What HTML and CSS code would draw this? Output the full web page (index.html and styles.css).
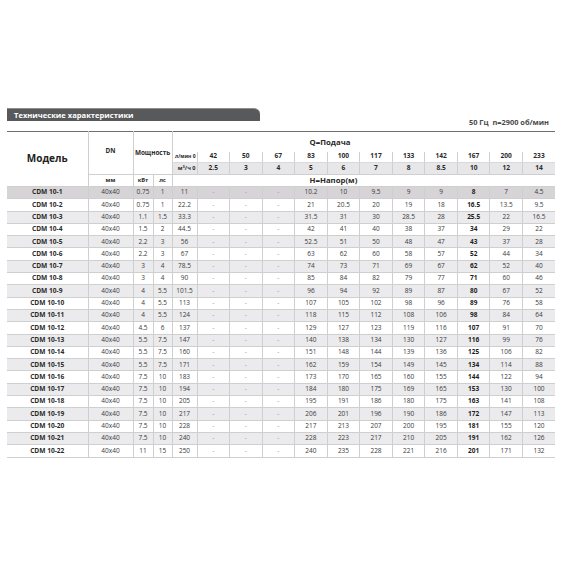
FILE: index.html
```html
<!DOCTYPE html>
<html lang="ru">
<head>
<meta charset="utf-8">
<title>CDM 10 — Технические характеристики</title>
<link rel="stylesheet" href="styles.css">
</head>
<body>
<div class="page">
  <div class="top">
    <div class="title">Технические характеристики</div>
    <div class="info">50 Гц&nbsp; n=2900 об/мин</div>
  </div>
  <table class="spec">
    <colgroup>
      <col class="c-model"><col class="c-dn"><col class="c-kw"><col class="c-hp"><col class="c-q0">
      <col class="c-q"><col class="c-q"><col class="c-q"><col class="c-q"><col class="c-q"><col class="c-q"><col class="c-q"><col class="c-q"><col class="c-q"><col class="c-q"><col class="c-q">
    </colgroup>
    <thead>
      <tr class="h-a">
        <th rowspan="4" class="model-h">Модель</th>
        <th rowspan="3" class="dn-h">DN</th>
        <th rowspan="3" colspan="2" class="pw-h">Мощность</th>
        <th colspan="12" class="q-h">Q=Подача</th>
      </tr>
      <tr class="h-b">
        <th class="lab lab-l">л/мин 0</th>
        <th>42</th><th>50</th><th>67</th><th>83</th><th>100</th><th>117</th><th>133</th><th>142</th><th>167</th><th>200</th><th>233</th>
      </tr>
      <tr class="h-c">
        <th class="lab">м<sup>3</sup>/ч 0</th>
        <th>2.5</th><th>3</th><th>4</th><th>5</th><th>6</th><th>7</th><th>8</th><th>8.5</th><th>10</th><th>12</th><th>14</th>
      </tr>
      <tr class="h-d">
        <th class="unit">мм</th><th class="unit">кВт</th><th class="unit">лс</th>
        <th colspan="12" class="q-h">H=Напор(м)</th>
      </tr>
    </thead>
    <tbody>
      <tr class="hl"><th>CDM 10-1</th><td>40x40</td><td>0.75</td><td>1</td><td>11</td><td class="d">-</td><td class="d">-</td><td class="d">-</td><td>10.2</td><td>10</td><td>9.5</td><td>9</td><td>9</td><td class="b">8</td><td>7</td><td>4.5</td></tr>
      <tr><th>CDM 10-2</th><td>40x40</td><td>0.75</td><td>1</td><td>22.2</td><td class="d">-</td><td class="d">-</td><td class="d">-</td><td>21</td><td>20.5</td><td>20</td><td>19</td><td>18</td><td class="b">16.5</td><td>13.5</td><td>9.5</td></tr>
      <tr class="odd"><th>CDM 10-3</th><td>40x40</td><td>1.1</td><td>1.5</td><td>33.3</td><td class="d">-</td><td class="d">-</td><td class="d">-</td><td>31.5</td><td>31</td><td>30</td><td>28.5</td><td>28</td><td class="b">25.5</td><td>22</td><td>16.5</td></tr>
      <tr><th>CDM 10-4</th><td>40x40</td><td>1.5</td><td>2</td><td>44.5</td><td class="d">-</td><td class="d">-</td><td class="d">-</td><td>42</td><td>41</td><td>40</td><td>38</td><td>37</td><td class="b">34</td><td>29</td><td>22</td></tr>
      <tr class="odd"><th>CDM 10-5</th><td>40x40</td><td>2.2</td><td>3</td><td>56</td><td class="d">-</td><td class="d">-</td><td class="d">-</td><td>52.5</td><td>51</td><td>50</td><td>48</td><td>47</td><td class="b">43</td><td>37</td><td>28</td></tr>
      <tr><th>CDM 10-6</th><td>40x40</td><td>2.2</td><td>3</td><td>67</td><td class="d">-</td><td class="d">-</td><td class="d">-</td><td>63</td><td>62</td><td>60</td><td>58</td><td>57</td><td class="b">52</td><td>44</td><td>34</td></tr>
      <tr class="odd"><th>CDM 10-7</th><td>40x40</td><td>3</td><td>4</td><td>78.5</td><td class="d">-</td><td class="d">-</td><td class="d">-</td><td>74</td><td>73</td><td>71</td><td>69</td><td>67</td><td class="b">62</td><td>52</td><td>40</td></tr>
      <tr><th>CDM 10-8</th><td>40x40</td><td>3</td><td>4</td><td>90</td><td class="d">-</td><td class="d">-</td><td class="d">-</td><td>85</td><td>84</td><td>82</td><td>79</td><td>77</td><td class="b">71</td><td>60</td><td>46</td></tr>
      <tr class="odd"><th>CDM 10-9</th><td>40x40</td><td>4</td><td>5.5</td><td>101.5</td><td class="d">-</td><td class="d">-</td><td class="d">-</td><td>96</td><td>94</td><td>92</td><td>89</td><td>87</td><td class="b">80</td><td>67</td><td>52</td></tr>
      <tr><th>CDM 10-10</th><td>40x40</td><td>4</td><td>5.5</td><td>113</td><td class="d">-</td><td class="d">-</td><td class="d">-</td><td>107</td><td>105</td><td>102</td><td>98</td><td>96</td><td class="b">89</td><td>76</td><td>58</td></tr>
      <tr class="odd"><th>CDM 10-11</th><td>40x40</td><td>4</td><td>5.5</td><td>124</td><td class="d">-</td><td class="d">-</td><td class="d">-</td><td>118</td><td>115</td><td>112</td><td>108</td><td>106</td><td class="b">98</td><td>84</td><td>64</td></tr>
      <tr><th>CDM 10-12</th><td>40x40</td><td>4.5</td><td>6</td><td>137</td><td class="d">-</td><td class="d">-</td><td class="d">-</td><td>129</td><td>127</td><td>123</td><td>119</td><td>116</td><td class="b">107</td><td>91</td><td>70</td></tr>
      <tr class="odd"><th>CDM 10-13</th><td>40x40</td><td>5.5</td><td>7.5</td><td>147</td><td class="d">-</td><td class="d">-</td><td class="d">-</td><td>140</td><td>138</td><td>134</td><td>130</td><td>127</td><td class="b">116</td><td>99</td><td>76</td></tr>
      <tr><th>CDM 10-14</th><td>40x40</td><td>5.5</td><td>7.5</td><td>160</td><td class="d">-</td><td class="d">-</td><td class="d">-</td><td>151</td><td>148</td><td>144</td><td>139</td><td>136</td><td class="b">125</td><td>106</td><td>82</td></tr>
      <tr class="odd"><th>CDM 10-15</th><td>40x40</td><td>5.5</td><td>7.5</td><td>171</td><td class="d">-</td><td class="d">-</td><td class="d">-</td><td>162</td><td>159</td><td>154</td><td>149</td><td>145</td><td class="b">134</td><td>114</td><td>88</td></tr>
      <tr><th>CDM 10-16</th><td>40x40</td><td>7.5</td><td>10</td><td>183</td><td class="d">-</td><td class="d">-</td><td class="d">-</td><td>173</td><td>170</td><td>165</td><td>160</td><td>155</td><td class="b">144</td><td>122</td><td>94</td></tr>
      <tr class="odd"><th>CDM 10-17</th><td>40x40</td><td>7.5</td><td>10</td><td>194</td><td class="d">-</td><td class="d">-</td><td class="d">-</td><td>184</td><td>180</td><td>175</td><td>169</td><td>165</td><td class="b">153</td><td>130</td><td>100</td></tr>
      <tr><th>CDM 10-18</th><td>40x40</td><td>7.5</td><td>10</td><td>205</td><td class="d">-</td><td class="d">-</td><td class="d">-</td><td>195</td><td>191</td><td>186</td><td>180</td><td>175</td><td class="b">163</td><td>141</td><td>108</td></tr>
      <tr class="odd"><th>CDM 10-19</th><td>40x40</td><td>7.5</td><td>10</td><td>217</td><td class="d">-</td><td class="d">-</td><td class="d">-</td><td>206</td><td>201</td><td>196</td><td>190</td><td>186</td><td class="b">172</td><td>147</td><td>113</td></tr>
      <tr><th>CDM 10-20</th><td>40x40</td><td>7.5</td><td>10</td><td>228</td><td class="d">-</td><td class="d">-</td><td class="d">-</td><td>217</td><td>213</td><td>207</td><td>200</td><td>195</td><td class="b">181</td><td>155</td><td>120</td></tr>
      <tr class="odd"><th>CDM 10-21</th><td>40x40</td><td>7.5</td><td>10</td><td>240</td><td class="d">-</td><td class="d">-</td><td class="d">-</td><td>228</td><td>223</td><td>217</td><td>210</td><td>205</td><td class="b">191</td><td>162</td><td>126</td></tr>
      <tr><th>CDM 10-22</th><td>40x40</td><td>11</td><td>15</td><td>250</td><td class="d">-</td><td class="d">-</td><td class="d">-</td><td>240</td><td>235</td><td>228</td><td>221</td><td>216</td><td class="b">201</td><td>171</td><td>132</td></tr>
    </tbody>
  </table>
</div>
</body>
</html>
```
FILE: styles.css
```css
html, body {
  margin: 0;
  padding: 0;
  background: #ffffff;
}

body {
  font-family: "Open Sans", "Noto Sans", "Liberation Sans", sans-serif;
  color: #2b2b2b;
}

.page {
  padding: 108px 15px 0 7px;
  width: 548px;
}

.top {
  display: flex;
  justify-content: space-between;
  align-items: flex-start;
  height: 23px;
}

.title {
  width: 253px;
  height: 13px;
  padding-left: 7px;
  background: #58595b;
  border-top: 1px solid #8c8d8f;
  box-sizing: border-box;
  border-top-right-radius: 6px;
  color: #ffffff;
  font-weight: 700;
  font-size: 7.6px;
  line-height: 12px;
  white-space: nowrap;
}

.info {
  margin-top: 10px;
  margin-right: 6px;
  font-size: 7.4px;
  line-height: 9px;
  font-weight: 700;
  color: #4a4a4a;
  white-space: nowrap;
}

.spec {
  width: 548px;
  table-layout: fixed;
  border-collapse: collapse;
  border-top: 1px solid #707070;
  border-bottom: 1.5px solid #8a8a8a;
  text-align: center;
  font-size: 6.5px;
  line-height: 1;
}

.c-model { width: 81px; }
.c-dn { width: 45px; }
.c-kw { width: 20px; }
.c-hp { width: 19px; }
.c-q0 { width: 25px; }
.c-q { width: 32.55px; }

.spec th,
.spec td {
  padding: 0;
  border: 1px solid #cfcfcf;
  white-space: nowrap;
  overflow: hidden;
}

.spec tr > :first-child { border-left: none; }
.spec tr > :last-child { border-right: none; }

/* header */
.spec thead th {
  font-weight: 700;
  color: #2b2b2b;
  font-size: 6.6px;
}

.h-a { height: 20px; }
.h-b { height: 11px; }
.h-c { height: 12px; }
.h-d { height: 12px; }

.spec thead .model-h {
  font-size: 10px;
  color: #222;
  border-top: none;
  border-left: none;
  padding-bottom: 3px;
}

.spec thead .dn-h {
  font-size: 6.4px;
  padding-bottom: 4px;
  border-top: none;
}

.spec thead .pw-h {
  font-size: 6.4px;
  border-top: none;
}

.spec thead .q-h {
  text-align: left;
  padding-left: 137px;
  font-size: 7.8px;
  border-top: none;
  border-bottom: none;
  vertical-align: middle;
}

.h-a .q-h {
  vertical-align: top;
  padding-top: 2px;
}

.h-b th {
  border-top: none;
  border-bottom: 1px solid #d9d9d9;
}

.h-c th {
  background: #e7e6e8;
  border-bottom: 1px solid #cfcfcf;
}

.spec thead .lab {
  font-size: 5px;
  text-align: right;
  padding-right: 1px;
}

.spec thead .h-c .lab {
  font-size: 5.6px;
}

.lab sup {
  font-size: 4px;
  line-height: 0;
  vertical-align: 2px;
}

.spec thead .unit {
  font-size: 5.8px;
  border-bottom: 1px solid #cfcfcf;
}

/* body */
.spec tbody tr { height: 12.3px; }

.spec tbody th {
  font-weight: 700;
  font-size: 6.6px;
  color: #2b2b2b;
}

.spec tbody td {
  color: #3a3a3a;
  font-weight: 400;
}

.spec tbody tr.odd > * { background: #ebeaec; }
.spec tbody tr.hl > * { background: #d7d4d7; }

.spec tbody td.b {
  font-weight: 700;
  color: #1e1e1e;
}

.spec tbody td.d {
  color: #9a9a9a;
}
```
